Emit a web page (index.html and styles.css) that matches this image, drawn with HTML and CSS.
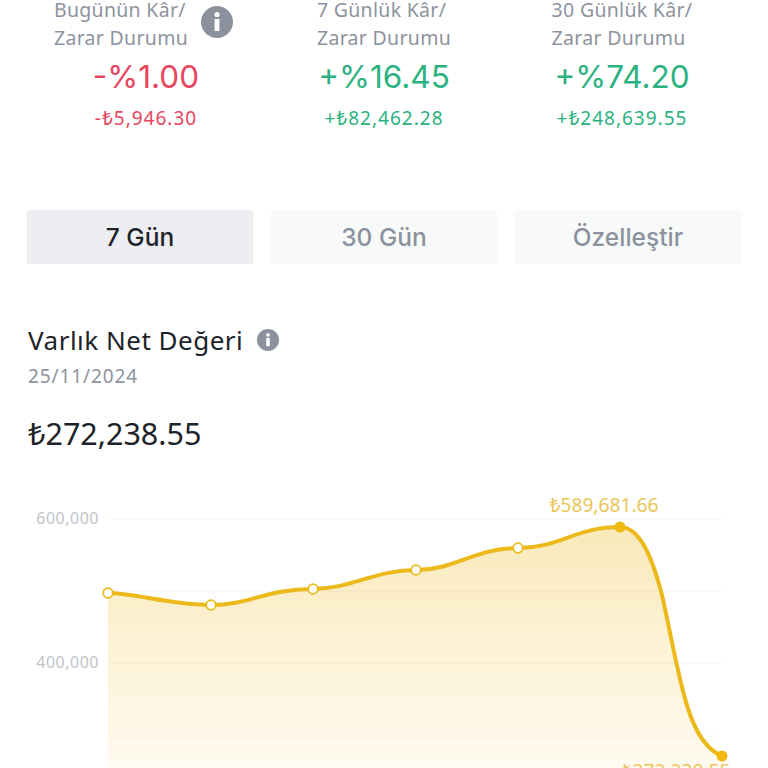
FILE: index.html
```html
<!DOCTYPE html>
<html lang="tr">
<head>
    <meta charset="UTF-8">
    <meta name="viewport" content="width=device-width, initial-scale=1.0">
    <title>Varlık Net Değeri</title>
    <link rel="stylesheet" href="styles.css">
</head>
<body>
    <div class="page">
        <div class="stats">
            <div class="stat">
                <div class="stat-head with-info">
                    <div class="stat-label"><span>Bugünün Kâr/</span><span>Zarar Durumu</span></div>
                    <svg class="info info-large" viewBox="0 0 32 32">
                        <circle cx="16" cy="16" r="16" fill="#8b929d"/>
                        <circle cx="16" cy="8.5" r="2.6" fill="#fff"/>
                        <rect x="13.6" y="13" width="4.8" height="12" fill="#fff"/>
                    </svg>
                </div>
                <div class="stat-value red">-%1.00</div>
                <div class="stat-sub red">-₺5,946.30</div>
            </div>
            <div class="stat">
                <div class="stat-head">
                    <div class="stat-label"><span>7 Günlük Kâr/</span><span>Zarar Durumu</span></div>
                </div>
                <div class="stat-value green">+%16.45</div>
                <div class="stat-sub green">+₺82,462.28</div>
            </div>
            <div class="stat">
                <div class="stat-head">
                    <div class="stat-label"><span>30 Günlük Kâr/</span><span>Zarar Durumu</span></div>
                </div>
                <div class="stat-value green">+%74.20</div>
                <div class="stat-sub green">+₺248,639.55</div>
            </div>
        </div>

        <div class="tabs">
            <div class="tab active">7 Gün</div>
            <div class="tab">30 Gün</div>
            <div class="tab">Özelleştir</div>
        </div>

        <div class="net">
            <div class="net-title">
                <span>Varlık Net Değeri</span>
                <svg class="info" viewBox="0 0 32 32">
                    <circle cx="16" cy="16" r="16" fill="#8b929d"/>
                    <circle cx="16" cy="8.5" r="2.8" fill="#fff"/>
                    <rect x="13.4" y="13" width="5.2" height="12" fill="#fff"/>
                </svg>
            </div>
            <div class="net-date">25/11/2024</div>
            <div class="net-amount">₺272,238.55</div>
        </div>

        <svg class="chart" viewBox="0 0 768 300" width="768" height="300">
            <defs>
                <linearGradient id="area" x1="0" y1="0" x2="0" y2="1">
                    <stop offset="0" stop-color="#f9e9ba"/>
                    <stop offset="0.5" stop-color="#fdf3d8"/>
                    <stop offset="1" stop-color="#fffcf5"/>
                </linearGradient>
            </defs>
            <path fill="url(#area)" d="M108 103 C135 103 170 115 211 115 C250 115 265 99 313 99 C350 99 375 80 416 80 C455 80 475 58 518 58 C560 58 575 37 620 37 C640 37 652 68 660.7 100 C667 125 672 155 678 180 C685 212 695 255 722 266 L722 300 L108 300 Z"/>
            <g class="grid">
                <line x1="108" y1="29" x2="722" y2="29"/>
                <line x1="108" y1="101" x2="722" y2="101"/>
                <line x1="108" y1="173" x2="722" y2="173"/>
                <line x1="108" y1="246" x2="722" y2="246"/>
            </g>
            <path class="line" d="M108 103 C135 103 170 115 211 115 C250 115 265 99 313 99 C350 99 375 80 416 80 C455 80 475 58 518 58 C560 58 575 37 620 37 C640 37 652 68 660.7 100 C667 125 672 155 678 180 C685 212 695 255 722 266"/>
            <circle class="dot" cx="108" cy="103" r="4.8"/>
            <circle class="dot" cx="211" cy="115" r="4.8"/>
            <circle class="dot" cx="313" cy="99" r="4.8"/>
            <circle class="dot" cx="416" cy="80" r="4.8"/>
            <circle class="dot" cx="518" cy="58" r="4.8"/>
            <circle class="dot-full" cx="620" cy="37" r="5.5"/>
            <circle class="dot-full" cx="722" cy="266" r="5.5"/>
            <text class="axis" x="99" y="34" text-anchor="end">600,000</text>
            <text class="axis" x="99" y="178" text-anchor="end">400,000</text>
            <text class="peak" x="604" y="22" text-anchor="middle">₺589,681.66</text>
            <text class="peak" x="676" y="288" text-anchor="middle">₺272,238.55</text>
        </svg>
    </div>
</body>
</html>
```

FILE: styles.css
```css
html, body {
    margin: 0;
    height: 100%;
    overflow: hidden;
    background: #fff;
}

.page {
    font-family: "Noto Sans", sans-serif;
    color: #1e2329;
    height: 768px;
    overflow: hidden;
}

.stats {
    display: grid;
    grid-template-columns: repeat(3, 1fr);
    margin: 0 27px;
}

.stat {
    display: flex;
    flex-direction: column;
    align-items: center;
}

.stat-head {
    display: flex;
    align-items: center;
    gap: 13px;
    height: 48px;
}

.stat-head.with-info {
    margin-right: 5px;
}

.stat-label {
    display: flex;
    flex-direction: column;
    gap: 8px;
    font-size: 19.5px;
    line-height: 20px;
    letter-spacing: 0.3px;
    color: #8d939e;
}

.info {
    width: 22px;
    height: 22px;
}

.info-large {
    width: 32px;
    height: 32px;
    margin-bottom: 4px;
}

.stat-value {
    font-family: Inter, sans-serif;
    font-size: 31.5px;
    line-height: 40px;
    margin-top: 9px;
}

.stat-sub {
    font-size: 19px;
    line-height: 26px;
    letter-spacing: 1px;
    margin-top: 8px;
}

.red {
    color: #e8455f;
}

.green {
    color: #2bb281;
}

.tabs {
    display: grid;
    grid-template-columns: repeat(3, 1fr);
    gap: 18px;
    margin: 79px 27px 0;
}

.tab {
    height: 54px;
    line-height: 55px;
    text-align: center;
    font-family: Inter, sans-serif;
    font-size: 24.5px;
    font-weight: 500;
    color: #8b929d;
    background: #f8f9f9;
    border-radius: 2px;
}

.tab.active {
    color: #1e2329;
    background: #eceef1;
}

.net {
    margin: 58px 27px 0 28px;
}

.net-title {
    display: flex;
    align-items: center;
    gap: 14px;
    font-size: 26px;
    line-height: 36px;
    letter-spacing: 0.5px;
}

.net-date {
    font-size: 19px;
    line-height: 26px;
    letter-spacing: 0.9px;
    color: #8d939e;
    margin-top: 5px;
}

.net-amount {
    font-size: 30.5px;
    line-height: 40px;
    margin-top: 24px;
}

.chart {
    display: block;
    margin-top: 37px;
}

.grid line {
    stroke: #1e2329;
    stroke-opacity: 0.05;
    stroke-width: 1;
}

.line {
    fill: none;
    stroke: #ecb91a;
    stroke-width: 4;
}

.dot {
    fill: #fff;
    stroke: #ecb91a;
    stroke-width: 1.8;
}

.dot-full {
    fill: #efb90f;
}

.axis {
    font-family: "Noto Sans", sans-serif;
    font-size: 16px;
    letter-spacing: 0.5px;
    fill: #c0c4cb;
}

.peak {
    font-family: "Noto Sans", sans-serif;
    font-size: 19.2px;
    fill: #e9c659;
}
```
